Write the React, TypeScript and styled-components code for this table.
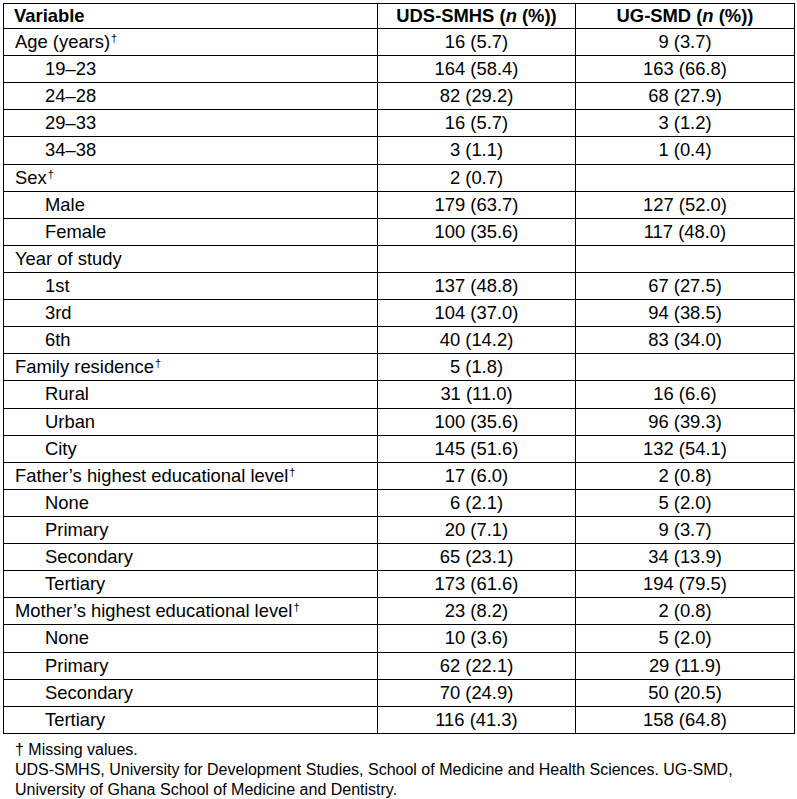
import React from "react";
import styled, { createGlobalStyle } from "styled-components";

const Global = createGlobalStyle`
  html, body { margin: 0; padding: 0; background: #fff; }
  body { font-family: "Liberation Sans", Arial, sans-serif; color: #000; }
`;

const Page = styled.div`
  padding: 3px 0 0 3px;
  width: 791px;
`;

const Table = styled.table`
  border-collapse: collapse;
  width: 791px;
  table-layout: fixed;
  font-size: 18.4px;
`;

const HeadCell = styled.th<{ $left?: boolean; $w: number }>`
  width: ${(p) => p.$w}px;
  border: 1px solid #000;
  height: 25px;
  padding: 0 10px;
  box-sizing: border-box;
  font-weight: bold;
  text-align: ${(p) => (p.$left ? "left" : "center")};
  line-height: 20px;
  vertical-align: middle;
  white-space: nowrap;
`;

const Cell = styled.td<{ $indent?: boolean; $center?: boolean }>`
  border: 1px solid #000;
  height: 26.12px;
  padding: 0 10px;
  padding-left: ${(p) => (p.$center ? "10px" : p.$indent ? "41px" : "11px")};
  text-align: ${(p) => (p.$center ? "center" : "left")};
  line-height: 20px;
  vertical-align: middle;
  white-space: nowrap;
`;

const Dagger = styled.sup`
  font-size: 11px;
  vertical-align: 6px;
  line-height: 0;
  margin-left: 1px;
`;

const Notes = styled.div`
  padding: 6px 0 0 12px;
  font-size: 16px;
  line-height: 20px;
`;

type Row = { label: string; a: string; b: string; sub?: boolean; dag?: boolean };

const rows: Row[] = [
  { label: "Age (years)", a: "16 (5.7)", b: "9 (3.7)", dag: true },
  { label: "19–23", a: "164 (58.4)", b: "163 (66.8)", sub: true },
  { label: "24–28", a: "82 (29.2)", b: "68 (27.9)", sub: true },
  { label: "29–33", a: "16 (5.7)", b: "3 (1.2)", sub: true },
  { label: "34–38", a: "3 (1.1)", b: "1 (0.4)", sub: true },
  { label: "Sex", a: "2 (0.7)", b: "", dag: true },
  { label: "Male", a: "179 (63.7)", b: "127 (52.0)", sub: true },
  { label: "Female", a: "100 (35.6)", b: "117 (48.0)", sub: true },
  { label: "Year of study", a: "", b: "" },
  { label: "1st", a: "137 (48.8)", b: "67 (27.5)", sub: true },
  { label: "3rd", a: "104 (37.0)", b: "94 (38.5)", sub: true },
  { label: "6th", a: "40 (14.2)", b: "83 (34.0)", sub: true },
  { label: "Family residence", a: "5 (1.8)", b: "", dag: true },
  { label: "Rural", a: "31 (11.0)", b: "16 (6.6)", sub: true },
  { label: "Urban", a: "100 (35.6)", b: "96 (39.3)", sub: true },
  { label: "City", a: "145 (51.6)", b: "132 (54.1)", sub: true },
  { label: "Father’s highest educational level", a: "17 (6.0)", b: "2 (0.8)", dag: true },
  { label: "None", a: "6 (2.1)", b: "5 (2.0)", sub: true },
  { label: "Primary", a: "20 (7.1)", b: "9 (3.7)", sub: true },
  { label: "Secondary", a: "65 (23.1)", b: "34 (13.9)", sub: true },
  { label: "Tertiary", a: "173 (61.6)", b: "194 (79.5)", sub: true },
  { label: "Mother’s highest educational level", a: "23 (8.2)", b: "2 (0.8)", dag: true },
  { label: "None", a: "10 (3.6)", b: "5 (2.0)", sub: true },
  { label: "Primary", a: "62 (22.1)", b: "29 (11.9)", sub: true },
  { label: "Secondary", a: "70 (24.9)", b: "50 (20.5)", sub: true },
  { label: "Tertiary", a: "116 (41.3)", b: "158 (64.8)", sub: true },
];

export default function App() {
  return (
    <Page>
      <Global />
      <Table>
        <thead>
          <tr>
            <HeadCell $left $w={374}>Variable</HeadCell>
            <HeadCell $w={198}>
              UDS-SMHS (<i>n</i> (%))
            </HeadCell>
            <HeadCell $w={219}>
              UG-SMD (<i>n</i> (%))
            </HeadCell>
          </tr>
        </thead>
        <tbody>
          {rows.map((r, i) => (
            <tr key={i}>
              <Cell $indent={r.sub}>
                {r.label}
                {r.dag && <Dagger>†</Dagger>}
              </Cell>
              <Cell $center>{r.a}</Cell>
              <Cell $center>{r.b}</Cell>
            </tr>
          ))}
        </tbody>
      </Table>
      <Notes>
        <div>† Missing values.</div>
        <div>
          UDS-SMHS, University for Development Studies, School of Medicine and Health Sciences. UG-SMD,
        </div>
        <div>University of Ghana School of Medicine and Dentistry.</div>
      </Notes>
    </Page>
  );
}
